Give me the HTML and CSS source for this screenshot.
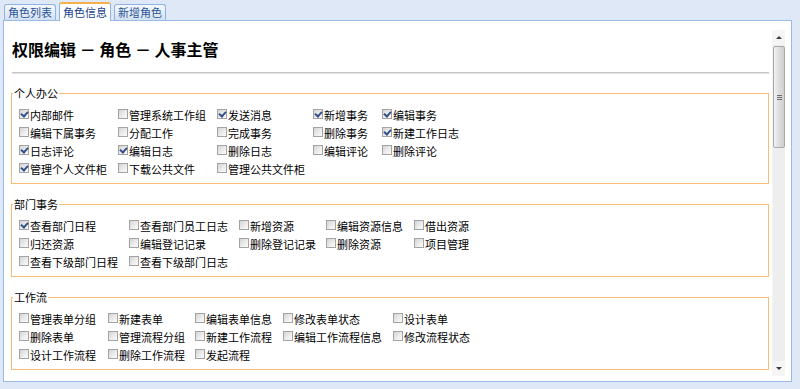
FILE: index.html
```
<!DOCTYPE html>
<html lang="zh-CN">
<head>
<meta charset="utf-8">
<title>权限编辑</title>
<link rel="stylesheet" href="styles.css">
</head>
<body>
<div class="tabs">
  <div class="tab">角色列表</div>
  <div class="tab active">角色信息</div>
  <div class="tab">新增角色</div>
</div>
<div class="panel">
  <div class="content">
    <h1 class="title">权限编辑 － 角色 － 人事主管</h1>
    <div class="rule"></div>

    <fieldset class="group">
      <legend>个人办公</legend>
      <div class="grid g1">
        <label class="item"><span class="cb on"></span>内部邮件</label>
        <label class="item"><span class="cb"></span>管理系统工作组</label>
        <label class="item"><span class="cb on"></span>发送消息</label>
        <label class="item"><span class="cb on"></span>新增事务</label>
        <label class="item"><span class="cb on"></span>编辑事务</label>
        <label class="item"><span class="cb"></span>编辑下属事务</label>
        <label class="item"><span class="cb"></span>分配工作</label>
        <label class="item"><span class="cb"></span>完成事务</label>
        <label class="item"><span class="cb"></span>删除事务</label>
        <label class="item"><span class="cb on"></span>新建工作日志</label>
        <label class="item"><span class="cb on"></span>日志评论</label>
        <label class="item"><span class="cb on"></span>编辑日志</label>
        <label class="item"><span class="cb"></span>删除日志</label>
        <label class="item"><span class="cb"></span>编辑评论</label>
        <label class="item"><span class="cb"></span>删除评论</label>
        <label class="item"><span class="cb on"></span>管理个人文件柜</label>
        <label class="item"><span class="cb"></span>下载公共文件</label>
        <label class="item"><span class="cb"></span>管理公共文件柜</label>
      </div>
    </fieldset>

    <fieldset class="group">
      <legend>部门事务</legend>
      <div class="grid g2">
        <label class="item"><span class="cb on"></span>查看部门日程</label>
        <label class="item"><span class="cb"></span>查看部门员工日志</label>
        <label class="item"><span class="cb"></span>新增资源</label>
        <label class="item"><span class="cb"></span>编辑资源信息</label>
        <label class="item"><span class="cb"></span>借出资源</label>
        <label class="item"><span class="cb"></span>归还资源</label>
        <label class="item"><span class="cb"></span>编辑登记记录</label>
        <label class="item"><span class="cb"></span>删除登记记录</label>
        <label class="item"><span class="cb"></span>删除资源</label>
        <label class="item"><span class="cb"></span>项目管理</label>
        <label class="item"><span class="cb"></span>查看下级部门日程</label>
        <label class="item"><span class="cb"></span>查看下级部门日志</label>
      </div>
    </fieldset>

    <fieldset class="group">
      <legend>工作流</legend>
      <div class="grid g3">
        <label class="item"><span class="cb"></span>管理表单分组</label>
        <label class="item"><span class="cb"></span>新建表单</label>
        <label class="item"><span class="cb"></span>编辑表单信息</label>
        <label class="item"><span class="cb"></span>修改表单状态</label>
        <label class="item"><span class="cb"></span>设计表单</label>
        <label class="item"><span class="cb"></span>删除表单</label>
        <label class="item"><span class="cb"></span>管理流程分组</label>
        <label class="item"><span class="cb"></span>新建工作流程</label>
        <label class="item"><span class="cb"></span>编辑工作流程信息</label>
        <label class="item"><span class="cb"></span>修改流程状态</label>
        <label class="item"><span class="cb"></span>设计工作流程</label>
        <label class="item"><span class="cb"></span>删除工作流程</label>
        <label class="item"><span class="cb"></span>发起流程</label>
      </div>
    </fieldset>
  </div>

  <div class="scrollbar">
    <div class="sb-btn"><span class="arrow up"></span></div>
    <div class="sb-track">
      <div class="sb-thumb"><span class="grip"></span></div>
    </div>
    <div class="sb-btn"><span class="arrow down"></span></div>
  </div>
</div>
</body>
</html>
```
FILE: styles.css
```
* { box-sizing: border-box; }

html, body {
  margin: 0;
  padding: 0;
}

body {
  background: #dfe8f6;
  font-family: "Noto Sans CJK SC", "Liberation Sans", sans-serif;
  color: #000;
  width: 800px;
  height: 389px;
  overflow: hidden;
}

/* ---------- tabs ---------- */
.tabs {
  height: 20px;
  display: flex;
  align-items: flex-end;
  padding-left: 4px;
  gap: 3px;
  position: relative;
  z-index: 2;
}

.tab {
  height: 16px;
  padding: 0 3px;
  font-size: 11px;
  line-height: 15px;
  color: #2a5596;
  border: 1px solid #8db2e3;
  border-bottom: none;
  border-radius: 3px 3px 0 0;
  background: linear-gradient(#f5f8fd, #d3e0f2);
}

.tab.active {
  height: 19px;
  margin-bottom: -1px;
  line-height: 17px;
  background: #fff;
  color: #15428b;
  border-color: #8db2e3;
  border-top: 2px solid #f5b04a;
}

/* ---------- panel ---------- */
.panel {
  margin-left: 3px;
  width: 789px;
  height: 362px;
  border: 1px solid #99bbe8;
  background: #fff;
  padding: 9px 6px 5px 4px;
  display: flex;
  position: relative;
  z-index: 1;
}

.content {
  flex: 1;
  overflow: hidden;
  padding: 0 3px 0 3px;
}

.title {
  margin: 10px 0 0 1px;
  font-size: 16px;
  line-height: 19px;
  font-weight: bold;
  white-space: pre;
}

.rule {
  margin: 13px 0 0 1px;
  height: 2px;
  background: #c4c4c4;
  border-bottom: 1px solid #e2e2e2;
}

.group {
  margin: 12px 0 0 0;
  padding: 0 0 5px 0;
  border: 1px solid #f7bd70;
  min-width: 0;
}

.group + .group {
  margin-top: 13px;
}

.group legend {
  margin-left: 1px;
  padding: 0 1px;
  font-size: 11px;
  line-height: 14px;
}

.grid {
  display: grid;
  grid-auto-rows: 18px;
  margin: 6px 0 0 7px;
}

.g1 { grid-template-columns: 99px 99px 96px 69px 1fr; }
.g2 { grid-template-columns: 110px 110px 87px 88px 1fr; }
.g3 { grid-template-columns: 89px 87px 88px 110px 1fr; }

.item {
  display: flex;
  align-items: center;
  font-size: 11px;
  line-height: 18px;
  white-space: nowrap;
}

.cb {
  width: 10px;
  height: 10px;
  margin: 0 1px 3px 0;
  border: 1px solid #a3a3a3;
  background: linear-gradient(135deg, #d4d4d4 0%, #eeeeee 60%, #fbfbfb 100%);
  position: relative;
  flex: none;
}

.cb.on::after {
  content: "";
  position: absolute;
  left: 1px;
  top: 1px;
  width: 5px;
  height: 3px;
  border-left: 2px solid #34508a;
  border-bottom: 2px solid #34508a;
  transform: rotate(-48deg);
}

/* ---------- scrollbar ---------- */
.scrollbar {
  width: 13px;
  display: flex;
  flex-direction: column;
  background: #efefef;
  border-left: 1px solid #f4f4f4;
}

.sb-btn {
  height: 15px;
  flex: none;
  display: flex;
  align-items: center;
  justify-content: center;
  background: #f5f5f5;
}

.arrow {
  width: 0;
  height: 0;
  border-left: 3px solid transparent;
  border-right: 3px solid transparent;
}

.arrow.up { border-bottom: 3px solid #3a3a3a; }
.arrow.down { border-top: 3px solid #3a3a3a; }

.sb-track {
  flex: 1;
  padding-top: 1px;
  background: #eeeeee;
}

.sb-thumb {
  height: 102px;
  border: 1px solid #a9a9a9;
  border-radius: 2px;
  background: linear-gradient(90deg, #f2f2f2, #dcdcdc 55%, #cfcfcf);
  display: flex;
  align-items: center;
  justify-content: center;
}

.grip {
  width: 5px;
  height: 5px;
  background: repeating-linear-gradient(#6b6b6b 0 1px, transparent 1px 2px);
}
```
